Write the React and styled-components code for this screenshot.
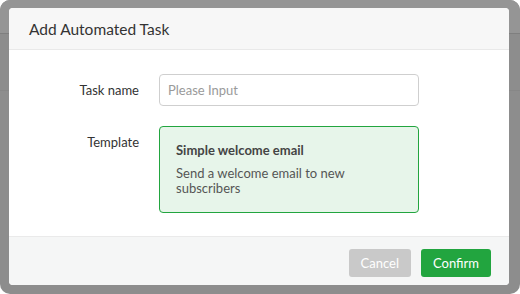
import styled, { createGlobalStyle } from "styled-components";

const GlobalStyle = createGlobalStyle`
  html, body {
    margin: 0;
    padding: 0;
    background: #ffffff;
  }
  body {
    font-family: "Segoe UI", Lato, "Noto Sans", sans-serif;
  }
  * {
    box-sizing: border-box;
  }
`;

const green = "#22a53f";

const Screen = styled.div`
  position: relative;
  width: 520px;
  height: 294px;
  border-radius: 10px;
  overflow: hidden;
  background: #8d8d8d;
`;

// underlying page seen through the overlay
const PageHeader = styled.div`
  height: 34px;
  background: #959595;
  border-bottom: 1px solid #7f7f7f;
`;

const PageRule = styled.div`
  margin-top: 56px;
  border-top: 1px solid #878787;
`;

const Overlay = styled.div`
  position: absolute;
  inset: 0;
  padding: 8px 11px 9px 9px;
  display: flex;
`;

const Dialog = styled.div`
  flex: 1;
  display: flex;
  flex-direction: column;
  background: #fff;
  border-radius: 4px;
  overflow: hidden;
`;

const Header = styled.div`
  height: 42px;
  display: flex;
  align-items: center;
  padding: 0 20px;
  background: #f7f7f7;
  border-bottom: 1px solid #e9e9e9;
`;

const Title = styled.h2`
  margin: 0;
  font-size: 15.5px;
  font-weight: 400;
  color: #333;
`;

const Body = styled.div`
  flex: 1;
  display: flex;
  flex-direction: column;
  gap: 20px;
  padding: 24px 0 0;
`;

const Row = styled.div`
  display: grid;
  grid-template-columns: 130px 260px;
  column-gap: 20px;
  align-items: ${(p) => (p.$top ? "start" : "center")};
`;

const Label = styled.label`
  text-align: right;
  font-size: 13px;
  color: #333;
  padding-top: ${(p) => (p.$top ? "8px" : "0")};
`;

const Input = styled.input`
  width: 260px;
  height: 32px;
  border: 1px solid #cfcfcf;
  border-radius: 4px;
  padding: 0 8px;
  font: inherit;
  font-size: 13px;
  color: #333;
  outline: none;

  &::placeholder {
    color: #9a9a9a;
  }
`;

const TemplateCard = styled.div`
  width: 260px;
  height: 87px;
  border: 1px solid ${green};
  border-radius: 4px;
  background: #e7f5ea;
  padding: 14px 16px 0;
`;

const CardTitle = styled.div`
  font-size: 13px;
  font-weight: 700;
  color: #444;
  line-height: 18px;
`;

const CardText = styled.div`
  margin-top: 7px;
  font-size: 13px;
  color: #555;
  line-height: 15px;
`;

const Footer = styled.div`
  height: 49px;
  display: flex;
  justify-content: flex-end;
  align-items: flex-start;
  gap: 10px;
  padding: 12px 18px 0;
  background: #f5f6f6;
  border-top: 1px solid #eaeaea;
`;

const Button = styled.button`
  height: 28px;
  min-width: ${(p) => (p.$primary ? "70px" : "62px")};
  padding: 0 12px;
  border: none;
  border-radius: 3px;
  font: inherit;
  font-size: 13px;
  color: #fff;
  background: ${(p) => (p.$primary ? green : "#c9c9c9")};
  cursor: pointer;
`;

export default function App() {
  return (
    <>
      <GlobalStyle />
      <Screen>
        <PageHeader />
        <PageRule />
        <Overlay>
          <Dialog>
            <Header>
              <Title>Add Automated Task</Title>
            </Header>
            <Body>
              <Row>
                <Label>Task name</Label>
                <Input placeholder="Please Input" />
              </Row>
              <Row $top>
                <Label $top>Template</Label>
                <TemplateCard>
                  <CardTitle>Simple welcome email</CardTitle>
                  <CardText>Send a welcome email to new subscribers</CardText>
                </TemplateCard>
              </Row>
            </Body>
            <Footer>
              <Button>Cancel</Button>
              <Button $primary>Confirm</Button>
            </Footer>
          </Dialog>
        </Overlay>
      </Screen>
    </>
  );
}
